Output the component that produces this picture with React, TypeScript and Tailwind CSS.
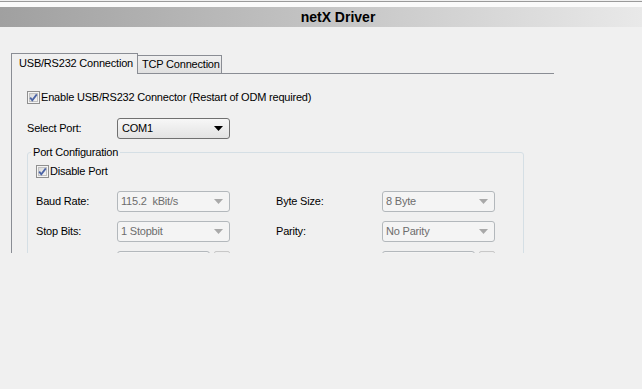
import React from "react";

function Check() {
  return (
    <svg width="13" height="13" viewBox="0 0 13 13" className="shrink-0">
      <defs>
        <linearGradient id="cbg" x1="0" y1="0" x2="1" y2="1">
          <stop offset="0" stopColor="#d8d8d8" />
          <stop offset="1" stopColor="#f6f6f6" />
        </linearGradient>
      </defs>
      <rect x="0.5" y="0.5" width="12" height="12" fill="#f4f4f4" stroke="#8f8f8f" />
      <rect x="2.5" y="2.5" width="8" height="8" fill="url(#cbg)" stroke="#c2c2c2" />
      <path d="M3.2 6.6 L5.3 9.2 L9.8 3.4" fill="none" stroke="#4b64a6" strokeWidth="1.8" />
    </svg>
  );
}

function Arrow({ color }: { color: string }) {
  return (
    <svg width="9" height="5" viewBox="0 0 9 5">
      <path d="M0 0 L9 0 L4.5 5 Z" fill={color} />
    </svg>
  );
}

function DisabledSelect({ value }: { value: string }) {
  return (
    <div className="w-[113px] h-[21px] border border-[#b3b8bc] rounded-[3px] bg-[#f4f4f4] flex items-center justify-between pl-[3px] pr-[6px] text-[#6d6d6d] whitespace-pre">
      <span>{value}</span>
      <Arrow color="#a9a9a9" />
    </div>
  );
}

function Partial() {
  return (
    <div className="flex gap-[4px]">
      <div className="w-[93px] h-[21px] border border-[#b3b8bc] rounded-[3px] bg-[#f4f4f4]" />
      <div className="w-[16px] h-[21px] border border-[#c8c8c8] rounded-[2px] bg-[#eeeeee]" />
    </div>
  );
}

export default function App() {
  return (
    <div
      className="w-[642px] h-[389px] bg-[#f0f0f0] text-[11px] tracking-[-0.2px] text-black overflow-hidden whitespace-nowrap"
      style={{ fontFamily: '"Liberation Sans", Arial, sans-serif' }}
    >
      <div className="h-[1px] bg-[#f0f0f0]" />
      <div className="h-[1px] bg-[#9a9a9a]" />
      <div className="h-[5px] bg-[#fafafa]" />
      <div className="h-[20px] bg-gradient-to-r from-[#a0a0a0] to-[#e9e9e9] flex items-center justify-center pl-[34px]">
        <span className="font-bold text-[14px] leading-none tracking-normal">netX Driver</span>
      </div>

      <div className="ml-[11px] mt-[26px] w-[543px] h-[200px] overflow-hidden">
        {/* tabs */}
        <div className="flex items-end h-[21px]">
          <div className="w-[127px] h-[21px] border-l border-t border-r border-[#8a8d94] bg-[#f0f0f0] flex items-center pl-[7px] pb-[1px]">
            USB/RS232 Connection
          </div>
          <div className="w-[84px] h-[19px] border-t border-r border-b border-[#8a8d94] bg-gradient-to-b from-[#f0f0f0] to-[#e0e0e0] flex items-center pl-[4px]">
            TCP Connection
          </div>
          <div className="flex-1 h-[1px] bg-[#8a8d94]" />
        </div>

        {/* panel */}
        <div className="border-l border-[#8a8d94] h-[180px] pl-[15px] pt-[17px]">
          <div className="flex items-center gap-[1px] h-[13px]">
            <Check />
            <span>Enable USB/RS232 Connector (Restart of ODM required)</span>
          </div>

          <div className="flex items-center mt-[14px]">
            <div className="w-[90px]">Select Port:</div>
            <div className="w-[113px] h-[21px] border border-[#707070] rounded-[3px] bg-gradient-to-b from-[#f7f7f7] to-[#e3e3e3] flex items-center justify-between pl-[4px] pr-[6px]">
              <span>COM1</span>
              <Arrow color="#000000" />
            </div>
          </div>

          <fieldset className="mt-[6px] w-[497px] border border-[#d5dfe5] rounded-[3px] pl-[8px] pb-[20px]">
            <legend className="ml-[-5px] px-[2px] leading-[15px]">Port Configuration</legend>
            <div className="flex items-center gap-[1px] mt-[5px] h-[13px]">
              <Check />
              <span>Disable Port</span>
            </div>

            <div className="grid grid-cols-[81px_113px_46px_106px_113px] gap-y-[9px] mt-[13px] items-center">
              <div>Baud Rate:</div>
              <DisabledSelect value="115.2  kBit/s" />
              <div />
              <div>Byte Size:</div>
              <DisabledSelect value="8 Byte" />

              <div>Stop Bits:</div>
              <DisabledSelect value="1 Stopbit" />
              <div />
              <div>Parity:</div>
              <DisabledSelect value="No Parity" />

              <div />
              <Partial />
              <div />
              <div />
              <Partial />
            </div>
          </fieldset>
        </div>
      </div>
    </div>
  );
}
